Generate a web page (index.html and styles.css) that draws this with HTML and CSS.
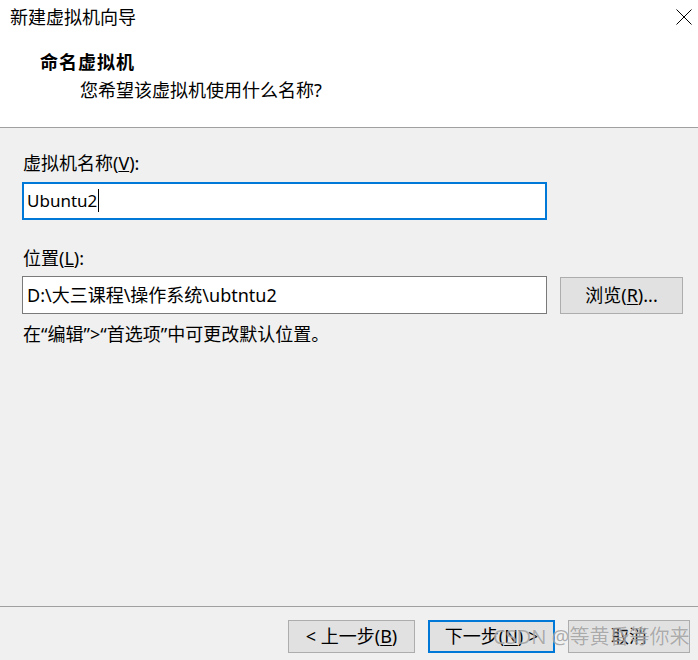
FILE: index.html
```html
<!DOCTYPE html>
<html lang="zh-CN">
<head>
	<meta charset="UTF-8">
	<title>新建虚拟机向导</title>
	<link rel="stylesheet" href="styles.css">
</head>
<body>
	<div class="wizard">
		<div class="header">
			<div class="title">新建虚拟机向导</div>
			<a href="javascript:;" class="close">
				<svg width="16" height="16" viewBox="0 0 16 16">
					<path d="M0.5 0.5 L15.5 15.5 M15.5 0.5 L0.5 15.5" stroke="#000" stroke-width="1" fill="none"/>
				</svg>
			</a>
			<div class="heading">命名虚拟机</div>
			<div class="subtitle">您希望该虚拟机使用什么名称?</div>
		</div>

		<div class="content">
			<div class="label">虚拟机名称(<u>V</u>):</div>
			<div class="textbox focus"><span class="caret">Ubuntu2</span></div>

			<div class="label label-loc">位置(<u>L</u>):</div>
			<div class="row">
				<div class="textbox path">D:\大三课程\操作系统\ubtntu2</div>
				<a href="javascript:;" class="btn browse">浏览(<u>R</u>)...</a>
			</div>
			<div class="hint">在“编辑”&gt;“首选项”中可更改默认位置。</div>
		</div>

		<div class="footer">
			<a href="javascript:;" class="btn">&lt; 上一步(<u>B</u>)</a>
			<a href="javascript:;" class="btn btn-focus">下一步(<u>N</u>) &gt;</a>
			<a href="javascript:;" class="btn btn-cancel">取消</a>
			<div class="watermark">CSDN @等黄昏等你来</div>
		</div>
	</div>
</body>
</html>
```
FILE: styles.css
```css
* {
	box-sizing: border-box;
}

html, body {
	margin: 0;
	padding: 0;
}

body {
	font-family: "Noto Sans", "Noto Sans CJK SC", sans-serif;
	font-size: 18px;
	color: #000;
	background: #f0f0f0;
}

.wizard {
	width: 698px;
	height: 660px;
	display: flex;
	flex-direction: column;
}

.header {
	position: relative;
	height: 128px;
	background: #fff;
	border-bottom: 1px solid #a0a0a0;
}

.title {
	padding: 6px 0 0 10px;
	line-height: 22px;
}

.close {
	position: absolute;
	top: 9px;
	right: 6px;
	display: block;
	width: 16px;
	height: 16px;
}

.close svg {
	display: block;
}

.heading {
	margin-top: 23px;
	padding-left: 40px;
	line-height: 22px;
	font-weight: bold;
	letter-spacing: 1px;
}

.subtitle {
	margin-top: 6px;
	padding-left: 80px;
	line-height: 22px;
}

.content {
	flex: 1;
	padding: 24px 0 0 22px;
}

.label {
	padding-left: 1px;
	line-height: 22px;
}

.label-loc {
	margin-top: 27px;
}

.textbox {
	width: 525px;
	height: 38px;
	margin-top: 8px;
	padding: 0 4px;
	background: #fff;
	border: 1px solid #7a7a7a;
	font-size: 17px;
	line-height: 36px;
	white-space: nowrap;
}

.textbox.path {
	font-size: 18px;
}

.textbox.focus {
	border: 2px solid #0078d7;
	line-height: 34px;
	padding-left: 3px;
}

.caret {
	border-right: 1px solid #000;
	padding-right: 1px;
}

.row {
	display: flex;
	align-items: flex-start;
	gap: 13px;
	margin-top: 7px;
}

.row .textbox {
	margin-top: 0;
}

.btn {
	display: block;
	height: 33px;
	background: #e1e1e1;
	border: 1px solid #adadad;
	color: #000;
	text-decoration: none;
	text-align: center;
	line-height: 31px;
}

.btn u {
	text-decoration-thickness: 1px;
	text-underline-offset: 2px;
}

.browse {
	width: 123px;
	height: 37px;
	margin-top: 1px;
	line-height: 35px;
}

.hint {
	margin-top: 9px;
	padding-left: 1px;
	line-height: 22px;
}

.footer {
	position: relative;
	height: 54px;
	border-top: 1px solid #a0a0a0;
	display: flex;
	justify-content: flex-end;
	gap: 13px;
	padding: 13px 8px 0 0;
}

.footer .btn {
	width: 127px;
}

.footer .btn-focus {
	border: 2px solid #0078d7;
	line-height: 29px;
}

.footer .btn-cancel {
	width: 122px;
}

.watermark {
	position: absolute;
	left: 493px;
	top: 18px;
	font-size: 20px;
	line-height: 24px;
	color: rgba(120, 120, 120, 0.6);
	text-shadow: 0 0 1px rgba(255, 255, 255, 0.8);
	white-space: nowrap;
	pointer-events: none;
}
```
